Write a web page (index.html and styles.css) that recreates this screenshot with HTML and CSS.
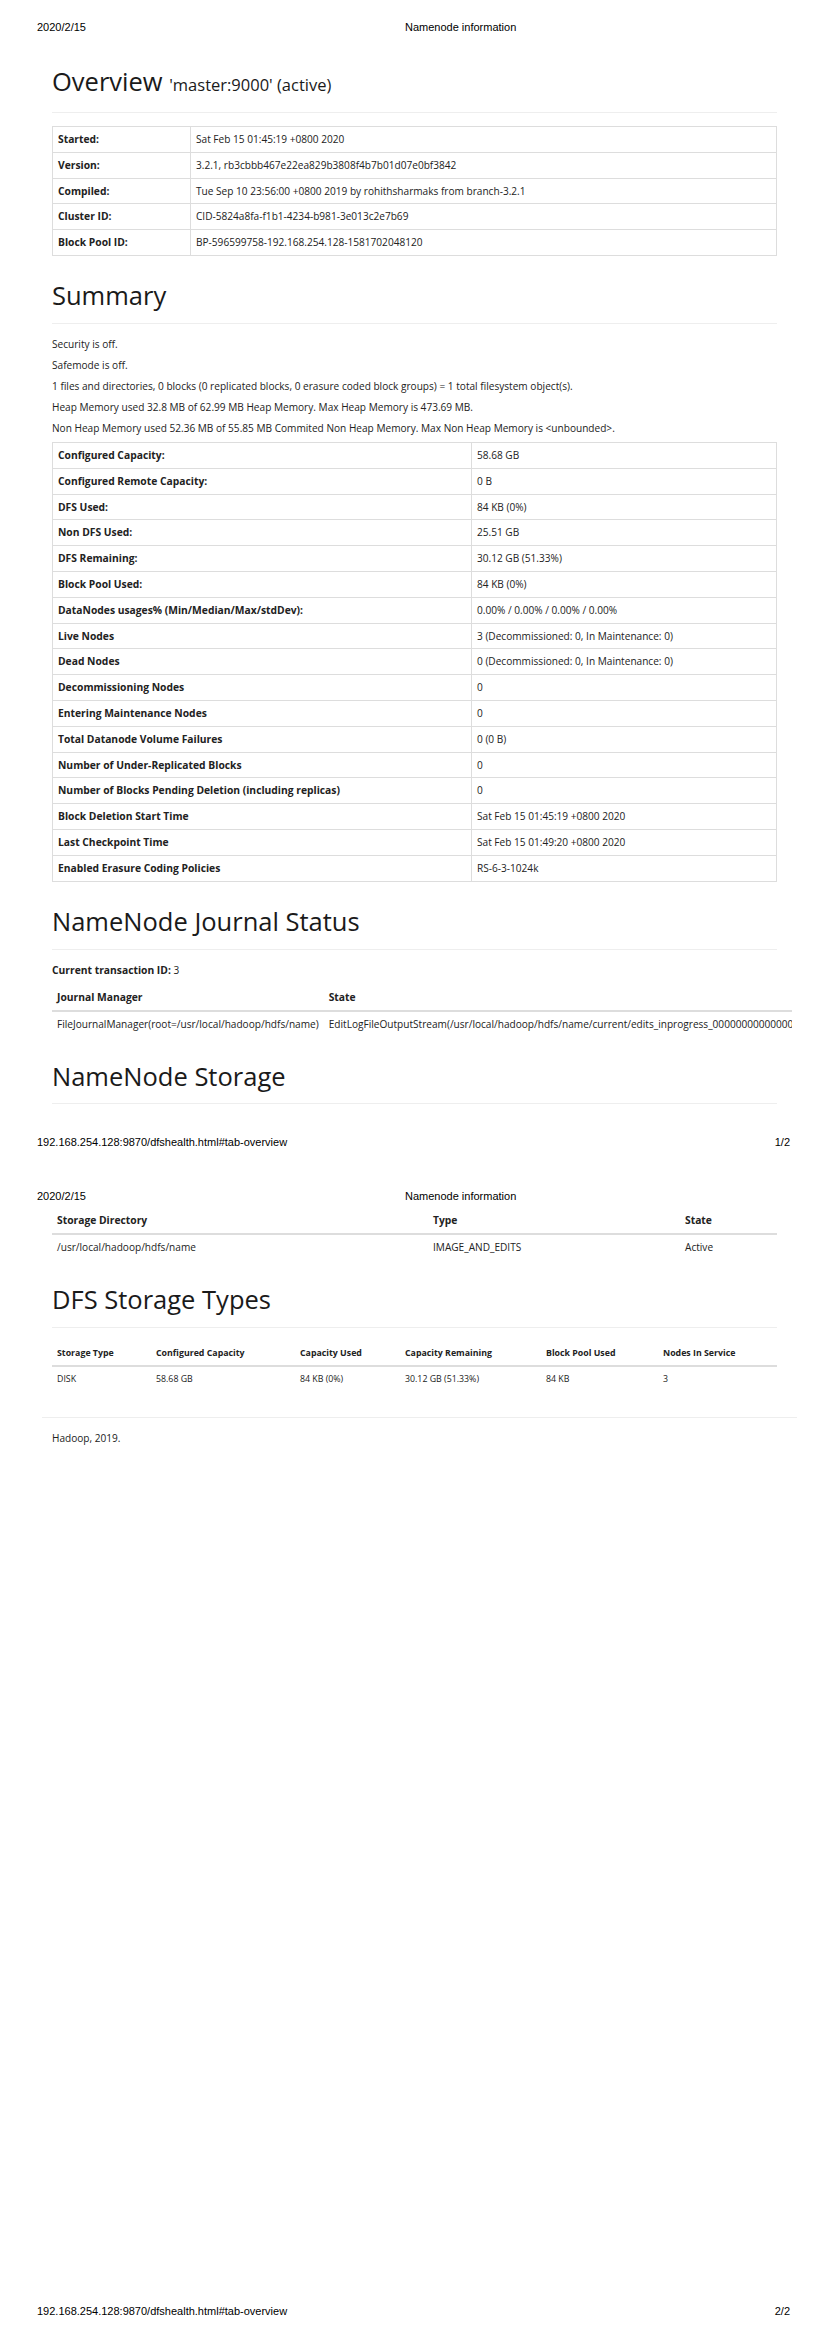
FILE: index.html
```html
<!DOCTYPE html>
<html>
<head>
<meta charset="utf-8">
<title>Namenode information</title>
<link rel="stylesheet" href="styles.css">
</head>
<body>
<div class="page">
  <div class="print-head"><span class="date">2020/2/15</span><span>Namenode information</span></div>
  <div class="page-body">
    <div class="content">
      <div class="section-head first"><h1>Overview <small>'master:9000' (active)</small></h1></div>
      <table class="tbl-bordered overview">
        <colgroup><col class="c-ov1"><col></colgroup>
        <tr><th>Started:</th><td>Sat Feb 15 01:45:19 +0800 2020</td></tr>
        <tr><th>Version:</th><td>3.2.1, rb3cbbb467e22ea829b3808f4b7b01d07e0bf3842</td></tr>
        <tr><th>Compiled:</th><td>Tue Sep 10 23:56:00 +0800 2019 by rohithsharmaks from branch-3.2.1</td></tr>
        <tr><th>Cluster ID:</th><td>CID-5824a8fa-f1b1-4234-b981-3e013c2e7b69</td></tr>
        <tr><th>Block Pool ID:</th><td>BP-596599758-192.168.254.128-1581702048120</td></tr>
      </table>

      <div class="section-head"><h1>Summary</h1></div>
      <div class="notes">
        <p>Security is off.</p>
        <p>Safemode is off.</p>
        <p>1 files and directories, 0 blocks (0 replicated blocks, 0 erasure coded block groups) = 1 total filesystem object(s).</p>
        <p>Heap Memory used 32.8 MB of 62.99 MB Heap Memory. Max Heap Memory is 473.69 MB.</p>
        <p>Non Heap Memory used 52.36 MB of 55.85 MB Commited Non Heap Memory. Max Non Heap Memory is &lt;unbounded&gt;.</p>
      </div>
      <table class="tbl-bordered summary">
        <colgroup><col class="c-sum1"><col></colgroup>
        <tr><th>Configured Capacity:</th><td>58.68 GB</td></tr>
        <tr><th>Configured Remote Capacity:</th><td>0 B</td></tr>
        <tr><th>DFS Used:</th><td>84 KB (0%)</td></tr>
        <tr><th>Non DFS Used:</th><td>25.51 GB</td></tr>
        <tr><th>DFS Remaining:</th><td>30.12 GB (51.33%)</td></tr>
        <tr><th>Block Pool Used:</th><td>84 KB (0%)</td></tr>
        <tr><th>DataNodes usages% (Min/Median/Max/stdDev):</th><td>0.00% / 0.00% / 0.00% / 0.00%</td></tr>
        <tr><th>Live Nodes</th><td>3 (Decommissioned: 0, In Maintenance: 0)</td></tr>
        <tr><th>Dead Nodes</th><td>0 (Decommissioned: 0, In Maintenance: 0)</td></tr>
        <tr><th>Decommissioning Nodes</th><td>0</td></tr>
        <tr><th>Entering Maintenance Nodes</th><td>0</td></tr>
        <tr><th>Total Datanode Volume Failures</th><td>0 (0 B)</td></tr>
        <tr><th>Number of Under-Replicated Blocks</th><td>0</td></tr>
        <tr><th>Number of Blocks Pending Deletion (including replicas)</th><td>0</td></tr>
        <tr><th>Block Deletion Start Time</th><td>Sat Feb 15 01:45:19 +0800 2020</td></tr>
        <tr><th>Last Checkpoint Time</th><td>Sat Feb 15 01:49:20 +0800 2020</td></tr>
        <tr><th>Enabled Erasure Coding Policies</th><td>RS-6-3-1024k</td></tr>
      </table>

      <div class="section-head"><h1>NameNode Journal Status</h1></div>
      <p class="txid"><b>Current transaction ID:</b> 3</p>
      <div class="clip">
        <table class="tbl journal">
          <thead><tr><th>Journal Manager</th><th>State</th></tr></thead>
          <tbody><tr><td>FileJournalManager(root=/usr/local/hadoop/hdfs/name)</td><td>EditLogFileOutputStream(/usr/local/hadoop/hdfs/name/current/edits_inprogress_0000000000000000003)</td></tr></tbody>
        </table>
      </div>

      <div class="section-head"><h1>NameNode Storage</h1></div>
    </div>
  </div>
  <div class="print-foot"><span>192.168.254.128:9870/dfshealth.html#tab-overview</span><span>1/2</span></div>
</div>

<div class="page">
  <div class="print-head"><span class="date">2020/2/15</span><span>Namenode information</span></div>
  <div class="page-body">
    <div class="content">
      <table class="tbl storage">
        <colgroup><col class="c-st1"><col class="c-st2"><col></colgroup>
        <thead><tr><th>Storage Directory</th><th>Type</th><th>State</th></tr></thead>
        <tbody><tr><td>/usr/local/hadoop/hdfs/name</td><td>IMAGE_AND_EDITS</td><td>Active</td></tr></tbody>
      </table>

      <div class="section-head"><h1>DFS Storage Types</h1></div>
      <table class="tbl types">
        <colgroup><col class="c-t1"><col class="c-t2"><col class="c-t3"><col class="c-t4"><col class="c-t5"><col></colgroup>
        <thead><tr><th>Storage Type</th><th>Configured Capacity</th><th>Capacity Used</th><th>Capacity Remaining</th><th>Block Pool Used</th><th>Nodes In Service</th></tr></thead>
        <tbody><tr><td>DISK</td><td>58.68 GB</td><td>84 KB (0%)</td><td>30.12 GB (51.33%)</td><td>84 KB</td><td>3</td></tr></tbody>
      </table>

      <hr class="footer-rule">
      <p class="credit">Hadoop, 2019.</p>
    </div>
  </div>
  <div class="print-foot"><span>192.168.254.128:9870/dfshealth.html#tab-overview</span><span>2/2</span></div>
</div>
</body>
</html>
```

FILE: styles.css
```css
* { box-sizing: border-box; }
html, body { margin: 0; padding: 0; background: #fff; }
body {
  font-family: "Open Sans", "Noto Sans", sans-serif;
  font-size: 10.1px;
  line-height: 14.8px;
  color: #222;
}

.page {
  height: 1169px;
  display: flex;
  flex-direction: column;
  overflow: hidden;
}

.print-head, .print-foot {
  flex: none;
  display: flex;
  font-family: "Liberation Sans", Arial, sans-serif;
  font-size: 11px;
  line-height: 14px;
  color: #000;
}
.print-head { height: 39px; padding: 20px 36px 5px 37px; }
.print-head .date { width: 368px; }
.print-foot { justify-content: space-between; padding: 0 36px 20px 37px; }

.page-body { flex: 1; overflow: hidden; padding-left: 52px; }
.content { width: 725px; }

.section-head {
  border-bottom: 1px solid #eee;
  padding-bottom: 12.6px;
  margin: 25.5px 0 13px;
}
.section-head.first { margin-top: 28.4px; }

h1 {
  margin: 0;
  font-size: 25.5px;
  line-height: 29px;
  font-weight: 400;
  color: #1a1a1a;
}
h1 small { font-size: 16.5px; }

p { margin: 0 0 6px; line-height: 15px; }
.txid { margin-bottom: 7px; }
b { font-weight: 700; font-size: 10.3px; }

table { border-collapse: collapse; border-spacing: 0; }

.tbl-bordered {
  width: 725px;
  table-layout: fixed;
  border: 1px solid #ddd;
}
.tbl-bordered th, .tbl-bordered td {
  border: 1px solid #ddd;
  padding: 5px;
  text-align: left;
  vertical-align: top;
  white-space: nowrap;
}
th { font-weight: 700; font-size: 10.3px; }
.c-ov1 { width: 138px; }
.c-sum1 { width: 419px; }

.tbl th, .tbl td {
  padding: 5px;
  text-align: left;
  vertical-align: top;
  white-space: nowrap;
}
.tbl th { border-bottom: 2px solid #ddd; }
.tbl td { border-top: 1px solid #ddd; }

.clip { width: 740px; overflow: hidden; }
.journal { width: auto; }

.storage { width: 725px; table-layout: fixed; }
.c-st1 { width: 376px; }
.c-st2 { width: 252px; }

.types { width: 725px; table-layout: fixed; }
.types th, .types td { font-size: 8.8px; }
.c-t1 { width: 99px; }
.c-t2 { width: 144px; }
.c-t3 { width: 105px; }
.c-t4 { width: 141px; }
.c-t5 { width: 117px; }

.footer-rule {
  height: 0;
  border: 0;
  border-top: 1px solid #eee;
  width: 755px;
  margin: 25px 0 12.5px -10px;
}
.credit { margin: 0; }
```
